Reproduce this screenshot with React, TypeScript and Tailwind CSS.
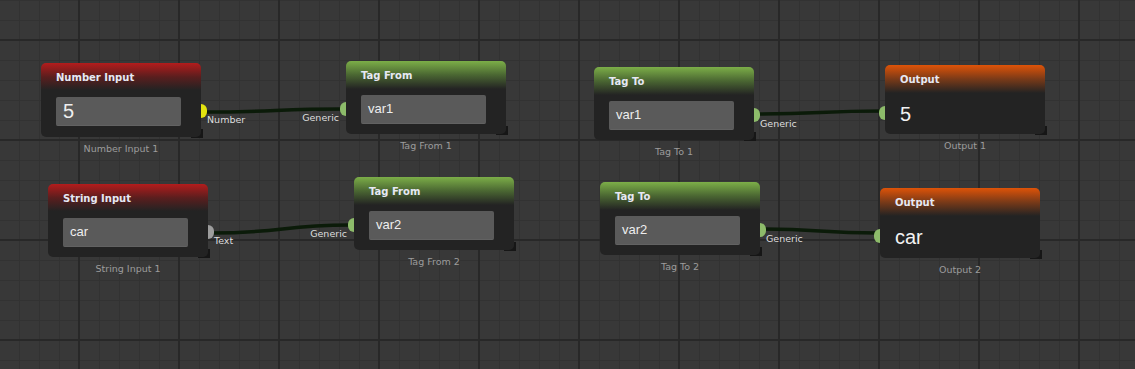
import React from 'react';

type Tone = 'red' | 'green' | 'orange';

const headerBg: Record<Tone, string> = {
    red: 'bg-[linear-gradient(to_bottom,#b31c1c_0px,#5a1e1e_14px,#232323_27px)]',
    green: 'bg-[linear-gradient(to_bottom,#7cae48_0px,#4a6632_14px,#232323_28px)]',
    orange: 'bg-[linear-gradient(to_bottom,#de5308_0px,#7a3a18_14px,#232323_28px)]',
};

interface Port {
    side: 'in' | 'out';
    color: string;
    label: string;
}

interface NodeProps {
    x: number;
    y: number;
    h: number;
    title: string;
    tone: Tone;
    caption: string;
    port: Port;
    children: React.ReactNode;
}

function GraphNode({ x, y, h, title, tone, caption, port, children }: NodeProps) {
    return (
        <div className="absolute w-[160px]" style={{ left: x, top: y }}>
            {/* resize grip peeking out under the card */}
            <div className="absolute right-[-2px] w-[12px] h-[9px] bg-[#161616]" style={{ top: h - 8 }} />

            <div className={`relative rounded-[5px] ${headerBg[tone]} flex flex-col`} style={{ height: h }}>
                <div className="h-[24px] shrink-0 flex items-center px-[15px] pt-[5px] text-[10px] font-bold text-[#e6e8f4] font-['DejaVu_Sans',sans-serif]">
                    {title}
                </div>
                <div className="flex-1 flex flex-col px-[15px] pt-[10px]">{children}</div>
            </div>

            {/* port + label */}
            {port.side === 'out' ? (
                <>
                    <div className="absolute left-[160px] top-[41px] w-[6px] h-[14px] rounded-r-full" style={{ backgroundColor: port.color }} />
                    <div className="absolute left-[166px] top-[51px] text-[9.5px] leading-[12px] text-[#dedede] font-['DejaVu_Sans',sans-serif] whitespace-nowrap">
                        {port.label}
                    </div>
                </>
            ) : (
                <>
                    <div className="absolute left-[-6px] top-[41px] w-[6px] h-[14px] rounded-l-full" style={{ backgroundColor: port.color }} />
                    <div className="absolute right-[167px] top-[51px] text-[9.5px] leading-[12px] text-[#dedede] font-['DejaVu_Sans',sans-serif] whitespace-nowrap">
                        {port.label}
                    </div>
                </>
            )}

            <div className="mt-[6px] text-center text-[9.5px] leading-[12px] text-[#9c9c9c] font-['DejaVu_Sans',sans-serif]">
                {caption}
            </div>
        </div>
    );
}

function Field({ value, big }: { value: string; big?: boolean }) {
    return (
        <div className="h-[29px] w-[125px] rounded-[2px] bg-[#5a5a5a] border-b border-[#626262] flex items-center px-[7px] font-['Liberation_Sans',sans-serif] text-[#eeeeee]">
            <span className={big ? 'text-[20px]' : 'text-[13px]'}>{value}</span>
        </div>
    );
}

function Value({ value }: { value: string }) {
    return (
        <div className="h-[29px] flex items-center font-['Liberation_Sans',sans-serif] text-[20px] text-[#f2f2f2]">
            {value}
        </div>
    );
}

const GENERIC = '#8dbb6a';

export default function App() {
    return (
        <div className="relative w-[1135px] h-[369px] overflow-hidden bg-[#383838] bg-[image:linear-gradient(to_right,#282828_2px,transparent_2px),linear-gradient(to_bottom,#282828_2px,transparent_2px),linear-gradient(to_right,#323232_1px,transparent_1px),linear-gradient(to_bottom,#323232_1px,transparent_1px)] bg-[size:100px_100px,100px_100px,20px_20px,20px_20px] bg-[position:78px_39px,78px_39px,19px_0px,19px_0px]">
            {/* wires */}
            <svg className="absolute inset-0" width="1135" height="369">
                <g fill="none" stroke="#0b1b09" strokeWidth="3.5" strokeLinecap="round">
                    <path d="M204 112 C 270 112, 280 109, 342 109" />
                    <path d="M211 233 C 285 233, 280 225, 350 225" />
                    <path d="M758 114 C 820 114, 820 111, 882 111" />
                    <path d="M764 229 C 820 229, 820 233, 877 233" />
                </g>
            </svg>

            <GraphNode x={41} y={63} h={74} title="Number Input" tone="red" caption="Number Input 1"
                port={{ side: 'out', color: '#e2e310', label: 'Number' }}>
                <Field value="5" big />
            </GraphNode>

            <GraphNode x={346} y={61} h={73} title="Tag From" tone="green" caption="Tag From 1"
                port={{ side: 'in', color: GENERIC, label: 'Generic' }}>
                <Field value="var1" />
            </GraphNode>

            <GraphNode x={594} y={67} h={73} title="Tag To" tone="green" caption="Tag To 1"
                port={{ side: 'out', color: GENERIC, label: 'Generic' }}>
                <Field value="var1" />
            </GraphNode>

            <GraphNode x={885} y={65} h={69} title="Output" tone="orange" caption="Output 1"
                port={{ side: 'in', color: GENERIC, label: '' }}>
                <Value value="5" />
            </GraphNode>

            <GraphNode x={48} y={184} h={73} title="String Input" tone="red" caption="String Input 1"
                port={{ side: 'out', color: '#9d9d9d', label: 'Text' }}>
                <Field value="car" />
            </GraphNode>

            <GraphNode x={354} y={177} h={73} title="Tag From" tone="green" caption="Tag From 2"
                port={{ side: 'in', color: GENERIC, label: 'Generic' }}>
                <Field value="var2" />
            </GraphNode>

            <GraphNode x={600} y={182} h={73} title="Tag To" tone="green" caption="Tag To 2"
                port={{ side: 'out', color: GENERIC, label: 'Generic' }}>
                <Field value="var2" />
            </GraphNode>

            <GraphNode x={880} y={188} h={70} title="Output" tone="orange" caption="Output 2"
                port={{ side: 'in', color: GENERIC, label: '' }}>
                <Value value="car" />
            </GraphNode>
        </div>
    );
}
